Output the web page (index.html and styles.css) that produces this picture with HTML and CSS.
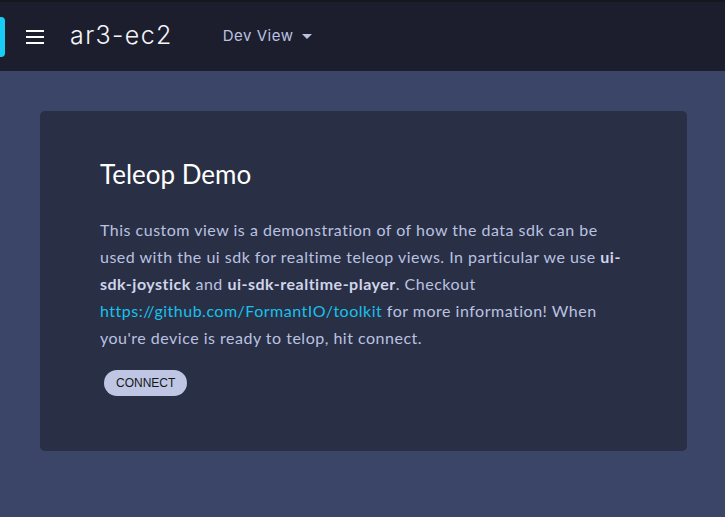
FILE: index.html
```html
<!DOCTYPE html>
<html>
<head>
<meta charset="utf-8">
<link rel="stylesheet" href="styles.css">
</head>
<body>
<header class="topbar">
  <div class="accent"></div>
  <button class="menu" aria-label="menu">
    <svg width="18" height="14" viewBox="0 0 18 14"><rect x="0" y="0" width="18" height="2" fill="#fff"/><rect x="0" y="6" width="18" height="2" fill="#fff"/><rect x="0" y="12" width="18" height="2" fill="#fff"/></svg>
  </button>
  <div class="device">ar3-ec2</div>
  <div class="view">Dev View <svg class="caret" width="10" height="5" viewBox="0 0 10 5"><path d="M0 0 L10 0 L5 5 Z" fill="#bac2e0"/></svg></div>
</header>
<main class="content">
  <section class="card">
    <h1 class="title">Teleop Demo</h1>
    <p class="desc">This custom view is a demonstration of of how the data sdk can be used with the ui sdk for realtime teleop views. In particular we use <b>ui-sdk-joystick</b> and <b>ui-sdk-realtime-player</b>. Checkout <a href="#">https://github.com/FormantIO/toolkit</a> for more information! When you're device is ready to telop, hit connect.</p>
    <button class="connect">CONNECT</button>
  </section>
</main>
</body>
</html>
```
FILE: styles.css
```css
html, body { margin: 0; padding: 0; }
body {
  background: #3b4567;
  width: 725px;
  height: 517px;
  overflow: hidden;
  font-family: "Lato", "Noto Sans", sans-serif;
}
.topbar {
  height: 69px;
  background: #1c1e2d;
  border-top: 2px solid #16171f;
  display: flex;
  align-items: center;
}
.accent {
  width: 5px;
  height: 40px;
  background: #18cdf5;
  border-radius: 0 4px 4px 0;
}
.menu {
  background: none;
  border: 0;
  padding: 0;
  margin-left: 21px;
  width: 18px;
  height: 14px;
  display: flex;
}
.device {
  margin-left: 26px;
  margin-bottom: 4px;
  color: #f4f5f8;
  font-family: "Inter", sans-serif;
  font-weight: 300;
  font-size: 25px;
  letter-spacing: 1.4px;
}
.view {
  margin-left: 50px;
  margin-bottom: 2px;
  color: #bac2e0;
  font-family: "Inter", sans-serif;
  font-size: 15px;
  letter-spacing: 0.5px;
  display: flex;
  align-items: center;
  gap: 9px;
}
.caret { margin-top: 2px; }
.content {
  padding: 40px 38px 0 40px;
}
.card {
  background: #292f45;
  border-radius: 5px;
  height: 340px;
  box-sizing: border-box;
  padding: 46px 60px 0 60px;
}
.title {
  margin: 0;
  font-weight: 400;
  font-size: 26px;
  color: #ffffff;
  line-height: 34px;
}
.desc {
  margin: 25px 0 0 0;
  font-size: 16px;
  line-height: 27px;
  letter-spacing: 0.5px;
  color: #bac2e0;
}
.desc b { font-weight: 700; color: #cfd5ea; }
.desc a { color: #18c1ec; text-decoration: none; }
.connect {
  margin-top: 19px;
  margin-left: 4px;
  height: 26px;
  padding: 0 12px;
  border: 0;
  border-radius: 13px;
  background: #bfc6e4;
  color: #161616;
  font-family: "Liberation Sans", Arial, sans-serif;
  font-size: 12px;
}
```
